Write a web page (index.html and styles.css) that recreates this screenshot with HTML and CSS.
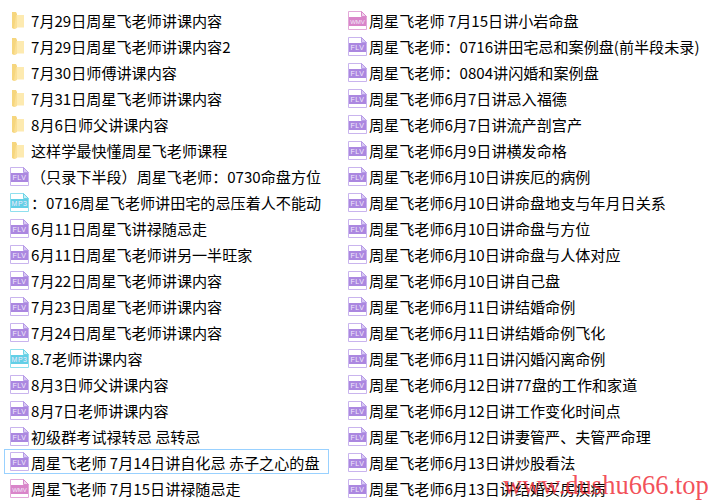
FILE: index.html
```html
<!DOCTYPE html>
<html lang="zh-CN">
<head>
  <meta charset="UTF-8" />
  <title>周星飞老师讲课内容</title>
  <link rel="stylesheet" href="styles.css">
</head>
<body>

  <svg class="defs" width="0" height="0">
    <symbol id="folder" viewBox="0 0 19 19">
      <path d="M2 1h4l1 2v14l-3 1-2-1z" fill="#f6d67e"/>
      <path d="M7 4h7v12.500H5l2-1z" fill="#fdeab0"/>
      <path d="M4 18l2-14h1v12.500z" fill="#fbe096"/>
    </symbol>
    <symbol id="flv" viewBox="0 0 19 19">
      <path d="M.5.5h13l5 5v13H.5z" fill="#fff" stroke="#c9b4ee"/>
      <path d="M13.500.5v5h5z" fill="#d9c9f4" stroke="#b79be6"/>
      <rect x="1" y="6" width="17" height="9" fill="#ab87e0"/>
      <text x="9.500" y="13" class="icon-label">FLV</text>
    </symbol>
    <symbol id="mp3" viewBox="0 0 19 19">
      <path d="M.5.5h13l5 5v13H.5z" fill="#fff" stroke="#8fe0ee"/>
      <path d="M13.500.5v5h5z" fill="#c6f0f7" stroke="#6fd4e6"/>
      <rect x="1" y="6" width="17" height="9" fill="#62cfe6"/>
      <text x="9.500" y="13" class="icon-label">MP3</text>
    </symbol>
    <symbol id="wmv" viewBox="0 0 19 19">
      <path d="M.5.5h13l5 5v13H.5z" fill="#fff" stroke="#e3a9d9"/>
      <path d="M13.500.5v5h5z" fill="#f2d3ec" stroke="#d98ccb"/>
      <rect x="1" y="6" width="17" height="9" fill="#d985c9"/>
      <text x="9.500" y="13" class="icon-label wide">WMV</text>
    </symbol>
  </svg>

  <div class="file-list">
    <div class="file-col">
      <div class="file-row"><svg class="icon"><use href="#folder"/></svg>7月29日周星飞老师讲课内容</div>
      <div class="file-row"><svg class="icon"><use href="#folder"/></svg>7月29日周星飞老师讲课内容2</div>
      <div class="file-row"><svg class="icon"><use href="#folder"/></svg>7月30日师傅讲课内容</div>
      <div class="file-row"><svg class="icon"><use href="#folder"/></svg>7月31日周星飞老师讲课内容</div>
      <div class="file-row"><svg class="icon"><use href="#folder"/></svg>8月6日师父讲课内容</div>
      <div class="file-row"><svg class="icon"><use href="#folder"/></svg>这样学最快懂周星飞老师课程</div>
      <div class="file-row"><svg class="icon"><use href="#flv"/></svg>（只录下半段）周星飞老师：0730命盘方位</div>
      <div class="file-row"><svg class="icon"><use href="#mp3"/></svg>：0716周星飞老师讲田宅的忌压着人不能动</div>
      <div class="file-row"><svg class="icon"><use href="#flv"/></svg>6月11日周星飞讲禄随忌走</div>
      <div class="file-row"><svg class="icon"><use href="#flv"/></svg>6月11日周星飞老师讲另一半旺家</div>
      <div class="file-row"><svg class="icon"><use href="#flv"/></svg>7月22日周星飞老师讲课内容</div>
      <div class="file-row"><svg class="icon"><use href="#flv"/></svg>7月23日周星飞老师讲课内容</div>
      <div class="file-row"><svg class="icon"><use href="#flv"/></svg>7月24日周星飞老师讲课内容</div>
      <div class="file-row"><svg class="icon"><use href="#mp3"/></svg>8.7老师讲课内容</div>
      <div class="file-row"><svg class="icon"><use href="#flv"/></svg>8月3日师父讲课内容</div>
      <div class="file-row"><svg class="icon"><use href="#flv"/></svg>8月7日老师讲课内容</div>
      <div class="file-row"><svg class="icon"><use href="#flv"/></svg>初级群考试禄转忌 忌转忌</div>
      <div class="file-row selected"><svg class="icon"><use href="#flv"/></svg>周星飞老师 7月14日讲自化忌 赤子之心的盘</div>
      <div class="file-row"><svg class="icon"><use href="#wmv"/></svg>周星飞老师 7月15日讲禄随忌走</div>
    </div>
    <div class="file-col">
      <div class="file-row"><svg class="icon"><use href="#wmv"/></svg>周星飞老师 7月15日讲小岩命盘</div>
      <div class="file-row"><svg class="icon"><use href="#flv"/></svg>周星飞老师：0716讲田宅忌和案例盘(前半段未录)</div>
      <div class="file-row"><svg class="icon"><use href="#flv"/></svg>周星飞老师：0804讲闪婚和案例盘</div>
      <div class="file-row"><svg class="icon"><use href="#flv"/></svg>周星飞老师6月7日讲忌入福德</div>
      <div class="file-row"><svg class="icon"><use href="#flv"/></svg>周星飞老师6月7日讲流产剖宫产</div>
      <div class="file-row"><svg class="icon"><use href="#flv"/></svg>周星飞老师6月9日讲横发命格</div>
      <div class="file-row"><svg class="icon"><use href="#flv"/></svg>周星飞老师6月10日讲疾厄的病例</div>
      <div class="file-row"><svg class="icon"><use href="#flv"/></svg>周星飞老师6月10日讲命盘地支与年月日关系</div>
      <div class="file-row"><svg class="icon"><use href="#flv"/></svg>周星飞老师6月10日讲命盘与方位</div>
      <div class="file-row"><svg class="icon"><use href="#flv"/></svg>周星飞老师6月10日讲命盘与人体对应</div>
      <div class="file-row"><svg class="icon"><use href="#flv"/></svg>周星飞老师6月10日讲自己盘</div>
      <div class="file-row"><svg class="icon"><use href="#flv"/></svg>周星飞老师6月11日讲结婚命例</div>
      <div class="file-row"><svg class="icon"><use href="#flv"/></svg>周星飞老师6月11日讲结婚命例飞化</div>
      <div class="file-row"><svg class="icon"><use href="#flv"/></svg>周星飞老师6月11日讲闪婚闪离命例</div>
      <div class="file-row"><svg class="icon"><use href="#flv"/></svg>周星飞老师6月12日讲77盘的工作和家道</div>
      <div class="file-row"><svg class="icon"><use href="#flv"/></svg>周星飞老师6月12日讲工作变化时间点</div>
      <div class="file-row"><svg class="icon"><use href="#flv"/></svg>周星飞老师6月12日讲妻管严、夫管严命理</div>
      <div class="file-row"><svg class="icon"><use href="#flv"/></svg>周星飞老师6月13日讲炒股看法</div>
      <div class="file-row"><svg class="icon"><use href="#flv"/></svg>周星飞老师6月13日讲结婚买房疾病</div>
    </div>
  </div>

  <div class="watermark">www.dushu666.top</div>

</body>
</html>
```

FILE: styles.css
```css
html, body {
  height: 503px;
  overflow: hidden;
}

body {
  margin: 0;
  background-color: #fff;
  font-family: "Noto Sans CJK SC", "Liberation Sans", sans-serif;
  font-size: 15.1px;
  color: #000;
}

.defs {
  display: none;
}

.file-list {
  display: grid;
  grid-template-columns: 338px 1fr;
  padding: 7px 0 0 4px;
}

.file-row {
  display: flex;
  align-items: center;
  height: 26px;
  padding-left: 6px;
  white-space: nowrap;
  box-sizing: border-box;
}

.file-row.selected {
  width: 325px;
  border: 1px solid #99d1ff;
  padding-left: 5px;
  height: 25px;
  margin-bottom: 1px;
}

.icon {
  flex: none;
  width: 19px;
  height: 19px;
  margin-right: 2px;
}

.icon-label {
  font-family: "Liberation Sans", sans-serif;
  font-size: 7px;
  letter-spacing: 0.5px;
  fill: #f1eafb;
  text-anchor: middle;
}

.icon-label.wide {
  font-size: 6px;
  letter-spacing: 0;
}

.watermark {
  position: absolute;
  left: 503px;
  top: 470px;
  font-family: "Liberation Serif", serif;
  font-size: 26.5px;
  color: rgba(240, 50, 60, 0.85);
  white-space: nowrap;
}
```
